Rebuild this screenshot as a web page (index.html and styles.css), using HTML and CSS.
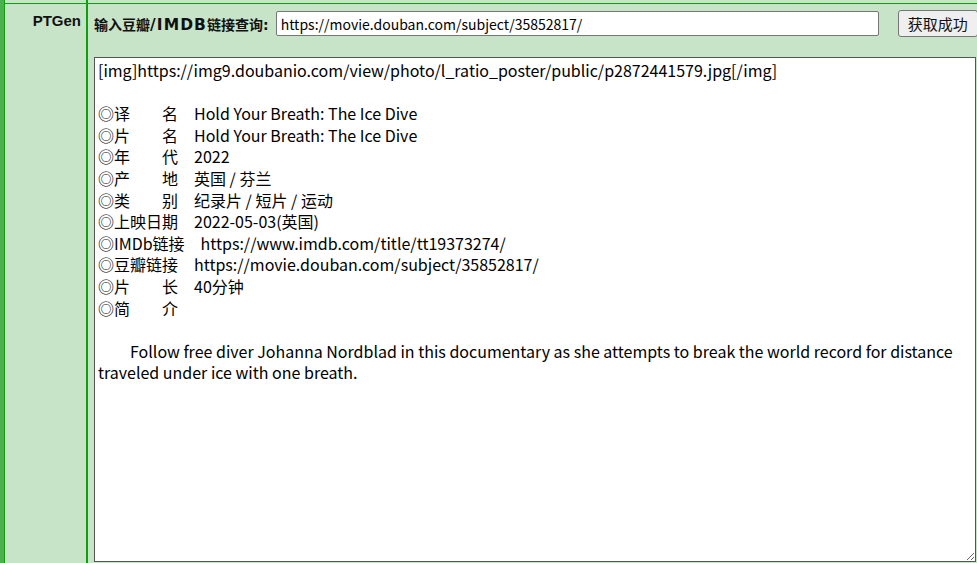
FILE: index.html
```html
<!DOCTYPE html>
<html lang="zh-CN">
<head>
<meta charset="utf-8">
<title>PTGen</title>
<link rel="stylesheet" href="styles.css">
</head>
<body>
<div class="table">
  <div class="row row-prev">
    <div class="label"></div>
    <div class="content"></div>
  </div>
  <div class="row">
    <div class="label"><span class="label-text">PTGen</span></div>
    <div class="content">
      <div class="query">
        <label class="query-label" for="q">输入豆瓣<span class="query-latin">/IMDB</span>链接查询:</label>
        <input class="query-input" id="q" type="text" value="https://movie.douban.com/subject/35852817/">
        <button class="query-btn" type="button">获取成功</button>
      </div>
      <textarea class="result" spellcheck="false">[img]https://img9.doubanio.com/view/photo/l_ratio_poster/public/p2872441579.jpg[/img]

◎译　　名　Hold Your Breath: The Ice Dive
◎片　　名　Hold Your Breath: The Ice Dive
◎年　　代　2022
◎产　　地　英国 / 芬兰
◎类　　别　纪录片 / 短片 / 运动
◎上映日期　2022-05-03(英国)
◎IMDb链接　https://www.imdb.com/title/tt19373274/
◎豆瓣链接　https://movie.douban.com/subject/35852817/
◎片　　长　40分钟
◎简　　介　

　　Follow free diver Johanna Nordblad in this documentary as she attempts to break the world record for distance traveled under ice with one breath.</textarea>
    </div>
  </div>
</div>
</body>
</html>
```
FILE: styles.css
```css
html, body {
  margin: 0;
  padding: 0;
  height: 100%;
}
body {
  background: #c8e4c8;
  border-left: 4px solid #4caf50;
  box-sizing: border-box;
  overflow: hidden;
  font-family: "DejaVu Sans", "Noto Sans CJK SC", sans-serif;
}
.table {
  border-left: 1px solid #0ca00c;
  min-height: 100%;
  display: flex;
  flex-direction: column;
}
.row {
  display: flex;
}
.row + .row {
  border-top: 1px solid #0ca00c;
  flex: 1;
}
.row-prev {
  height: 3px;
}
.label {
  flex: none;
  width: 83px;
  box-sizing: border-box;
  border-right: 2px solid #0ca00c;
  text-align: right;
  padding: 8px 5px 0 0;
  line-height: 17px;
}
.label-text {
  font-family: "Liberation Sans", "Noto Sans CJK SC", sans-serif;
  font-weight: bold;
  font-size: 15px;
  color: #111;
}
.content {
  flex: 1;
  min-width: 0;
  padding: 6px 1px 0 6px;
}
.query {
  display: flex;
  align-items: center;
  height: 27px;
  white-space: nowrap;
}
.query-label {
  font-weight: bold;
  font-size: 14px;
  color: #111;
  margin-right: 7px;
}
.query-latin {
  font-size: 15.5px;
  letter-spacing: 1.1px;
}
.query-input {
  flex: none;
  width: 603px;
  height: 25px;
  box-sizing: border-box;
  border: 1px solid #767676;
  border-radius: 2px;
  padding: 0 4px;
  font-family: "Noto Sans CJK SC", sans-serif;
  font-size: 14px;
  color: #000;
  background: #fff;
}
.query-btn {
  flex: none;
  margin-left: 19px;
  height: 27px;
  border: 1px solid #767676;
  border-radius: 3px;
  background: #efefef;
  padding: 0 9px;
  font-family: "Noto Sans CJK SC", sans-serif;
  font-size: 15px;
  color: #111;
}
.result {
  display: block;
  margin-top: 20px;
  width: 100%;
  height: 505px;
  box-sizing: border-box;
  border: 1px solid #555;
  padding: 2px 3px;
  font-family: "Noto Sans CJK SC", sans-serif;
  font-size: 16px;
  line-height: 21.6px;
  color: #000;
  background: #fff;
  resize: both;
}
```
